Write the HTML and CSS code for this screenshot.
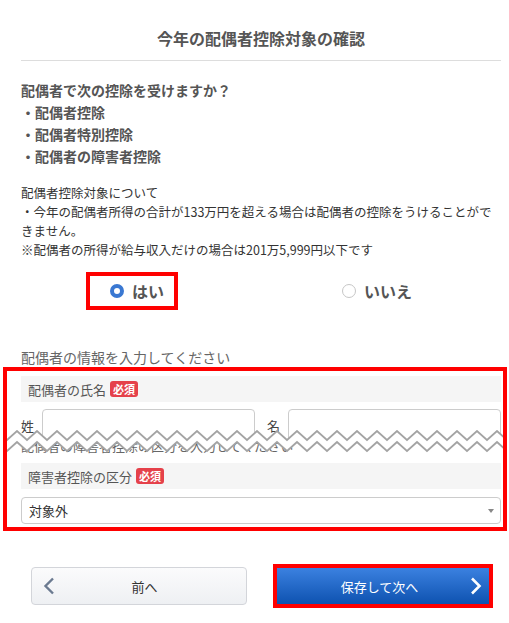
FILE: index.html
```html
<!DOCTYPE html>
<html lang="ja">
<head>
    <meta charset="UTF-8">
    <title>今年の配偶者控除対象の確認</title>
    <meta name="viewport" content="width=device-width, initial-scale=1.0">
    <link rel="stylesheet" href="styles.css">
</head>
<body>
<div class="container">
    <h2 class="title">今年の配偶者控除対象の確認</h2>

    <div class="question">
        <p>配偶者で次の控除を受けますか？</p>
        <p>・配偶者控除</p>
        <p>・配偶者特別控除</p>
        <p>・配偶者の障害者控除</p>
    </div>

    <div class="note">
        <p>配偶者控除対象について</p>
        <p>・今年の配偶者所得の合計が133万円を超える場合は配偶者の控除をうけることができません。</p>
        <p>※配偶者の所得が給与収入だけの場合は201万5,999円以下です</p>
    </div>

    <div class="choices">
        <label class="choice choice-yes mark"><span class="radio checked"></span>はい</label>
        <label class="choice choice-no"><span class="radio"></span>いいえ</label>
    </div>

    <div class="section-heading">配偶者の情報を入力してください</div>

    <div class="form-box mark">
        <div class="field-label">配偶者の氏名 <span class="required">必須</span></div>
        <div class="name-row">
            <span>姓</span>
            <input type="text" />
            <span class="given">名</span>
            <input type="text" />
        </div>
        <div class="cut-line">配偶者の障害者控除の区分を入力してください</div>

        <div class="field-label second">障害者控除の区分 <span class="required">必須</span></div>
        <div class="select">
            <span>対象外</span>
            <span class="caret"></span>
        </div>

        <!-- page break marker -->
        <svg class="tear" width="100%" height="23">
            <defs>
                <pattern id="zig" width="20" height="23" patternUnits="userSpaceOnUse">
                    <polygon points="0,10 10,1 20,10 20,21 10,12 0,21" fill="#fff"/>
                    <polyline points="-10,1 0,10 10,1 20,10 30,1" fill="none" stroke="#a3a3a3" stroke-width="1.8"/>
                    <polyline points="-10,12 0,21 10,12 20,21 30,12" fill="none" stroke="#a3a3a3" stroke-width="1.8"/>
                </pattern>
            </defs>
            <rect width="100%" height="23" fill="url(#zig)"/>
        </svg>
    </div>

    <div class="actions">
        <button class="btn btn-back">
            <svg width="12" height="18" viewBox="0 0 12 18"><polyline points="10,1.5 2.5,9 10,16.5" fill="none" stroke="#6b7a90" stroke-width="2.4"/></svg>
            <span>前へ</span>
            <span></span>
        </button>
        <div class="next-wrap mark">
            <button class="btn btn-next">
                <span></span>
                <span>保存して次へ</span>
                <svg width="12" height="18" viewBox="0 0 12 18"><polyline points="2,1.5 9.5,9 2,16.5" fill="none" stroke="#fff" stroke-width="2.6"/></svg>
            </button>
        </div>
    </div>
</div>
</body>
</html>
```

FILE: styles.css
```css
body { margin: 0; background: #fff; font-family: "Noto Sans CJK JP", "Noto Sans", sans-serif; color: #555; }
p { margin: 0; }
.container { padding: 0 8px 40px 21px; }

.title { margin: 0; padding: 26px 0 10px; font-size: 16px; line-height: 24px; font-weight: bold; text-align: center; color: #555; border-bottom: 1px solid #ddd; }

.question { margin-top: 18px; font-size: 14px; line-height: 22px; font-weight: bold; color: #555; }
.note { margin-top: 16px; font-size: 12.5px; line-height: 19px; color: #333; }

.mark { border: 4px solid #f00; }

.choices { margin-top: 13px; display: grid; grid-template-columns: 1fr 1fr; align-items: center; }
.choice { height: 38px; box-sizing: border-box; display: flex; align-items: center; gap: 8px; font-size: 16px; font-weight: bold; color: #555; justify-self: start; }
.choice-yes { margin-left: 65px; padding: 0 10px 0 20px; }
.choice-no { margin-left: 81px; }
.radio { width: 14px; height: 14px; box-sizing: border-box; border-radius: 50%; border: 1px solid #c6c6c6; background: #fff; }
.radio.checked { border: 4.5px solid #3a78d2; background: #fff; }

.section-heading { margin-top: 37px; font-size: 14px; line-height: 20px; color: #666; }

.form-box { position: relative; margin: 0 -6px 0 -18px; padding: 5px 2px 3px 14px; }
.field-label { height: 26px; box-sizing: border-box; padding-left: 7px; background: #f5f5f5; display: flex; align-items: center; gap: 4px; font-size: 13px; color: #555; }
.field-label.second { margin-top: 8px; }
.required { display: inline-block; height: 16px; line-height: 16px; padding: 0 3px; border-radius: 3px; background: #e5414a; color: #fff; font-size: 11px; font-weight: bold; }

.name-row { margin-top: 7px; display: grid; grid-template-columns: auto 1fr auto 1fr; column-gap: 8px; align-items: center; font-size: 13px; color: #444; }
.name-row .given { margin-left: 4px; }
.name-row input { width: 100%; min-width: 0; height: 32px; box-sizing: border-box; border: 1px solid #ccc; border-radius: 4px; }
.cut-line { margin-top: -4px; font-size: 13px; line-height: 18px; color: #666; }

.select { margin-top: 8px; height: 27px; box-sizing: border-box; border: 1px solid #ccc; border-radius: 4px; padding: 0 6px 0 7px; display: flex; align-items: center; justify-content: space-between; font-size: 13px; color: #333; }
.caret { width: 0; height: 0; border-left: 3px solid transparent; border-right: 3px solid transparent; border-top: 4px solid #888; }

.tear { position: absolute; left: 0; right: 0; top: 59px; width: 100%; height: 23px; display: block; }

.actions { margin-top: 36px; padding: 0 12px 0 10px; display: flex; justify-content: space-between; align-items: center; }
.btn { display: grid; grid-template-columns: 30px 1fr 30px; align-items: center; justify-items: center; box-sizing: border-box; font-family: inherit; font-size: 13px; cursor: pointer; }
.btn-back { width: 216px; height: 38px; padding: 0 0 0 11px; border: 1px solid #d3d5da; border-radius: 4px; background: linear-gradient(#fbfbfc, #eef0f3); color: #333; }
.btn-back svg { justify-self: start; }
.next-wrap { margin: -4px -4px -4px 0; }
.btn-next { width: 212px; height: 36px; padding: 0 7px 0 0; border: none; border-radius: 0; background: linear-gradient(#3b81e0, #0e52b0); color: #fff; }
.btn-next svg { justify-self: end; }
```
